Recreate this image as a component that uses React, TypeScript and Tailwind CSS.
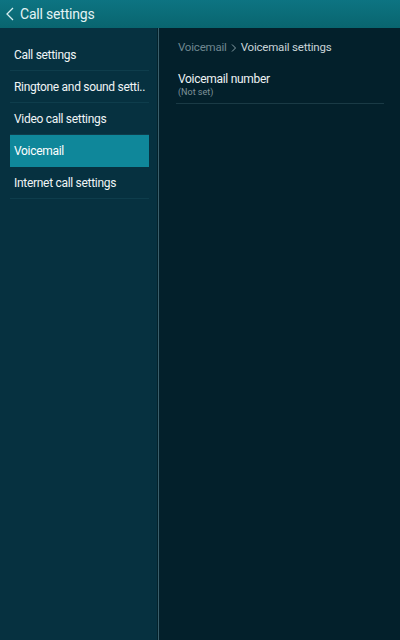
import React from 'react'

const items = ['Call settings', 'Ringtone and sound setti..', 'Video call settings', 'Voicemail', 'Internet call settings']

export default function App() {
  return (
    <div className="w-[400px] h-[640px] flex flex-col bg-[#03202b] text-white overflow-hidden" style={{ fontFamily: 'Roboto, "Noto Sans", sans-serif' }}>
      <div className="h-[28px] flex items-center bg-gradient-to-b from-[#0d7482] to-[#09656f]">
        <svg width="10" height="16" viewBox="0 0 10 16" className="ml-[5px] mr-[5px]">
          <path d="M8 2 L2 8 L8 14" fill="none" stroke="#d6eef0" strokeWidth="1.3" />
        </svg>
        <span className="text-[14px] tracking-[-0.2px] text-[#e3f3f4]">Call settings</span>
      </div>
      <div className="flex flex-1">
        <div className="w-[158px] bg-[#063140] border-r border-r-[#03222c] pt-[11px] pl-[10px] pr-[8px]">
          {items.map((t) => (
            <div
              key={t}
              className={
                t === 'Voicemail'
                  ? 'h-[32px] flex items-center px-[4px] bg-[#0f879a] text-[12px] tracking-[-0.3px] whitespace-nowrap text-white'
                  : 'h-[32px] flex items-center px-[4px] border-b border-b-[#0e3d4c] text-[12px] tracking-[-0.3px] whitespace-nowrap text-[#f0f5f6]'
              }
            >
              {t}
            </div>
          ))}
        </div>
        <div className="w-[1px] bg-[#3a5f6b]" />
        <div className="flex-1 pl-[17px] pr-[16px] pt-[12px]">
          <div className="flex items-center pl-[2px] text-[11.5px] tracking-[-0.2px] h-[16px]">
            <span className="text-[#6f8790]">Voicemail</span>
            <svg width="8" height="10" viewBox="0 0 8 10" className="mx-[3px]">
              <path d="M2 1.5 L5.5 5 L2 8.5" fill="none" stroke="#8aa0a8" strokeWidth="1" />
            </svg>
            <span className="text-[#c9d4d8]">Voicemail settings</span>
          </div>
          <div className="mt-[15px] pl-[2px] pb-[6px] border-b border-b-[#1a3a45]">
            <div className="text-[12px] tracking-[-0.3px] text-[#eef3f4] leading-[16px]">Voicemail number</div>
            <div className="text-[9px] text-[#7f939a] leading-[10px]">(Not set)</div>
          </div>
        </div>
      </div>
    </div>
  )
}
